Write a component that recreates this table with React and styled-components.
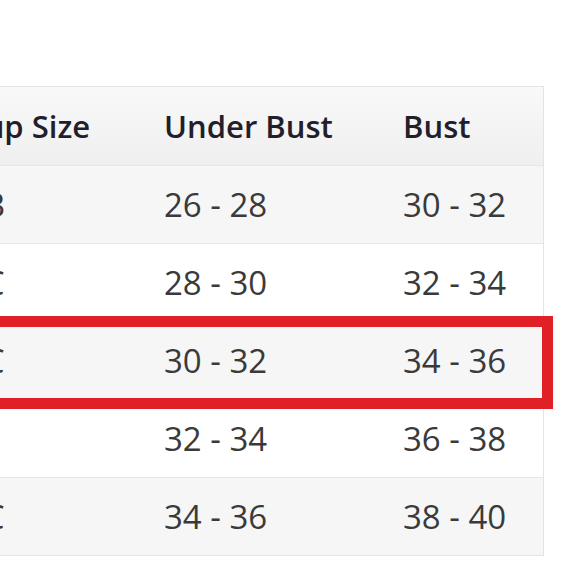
import React from "react";
import styled, { createGlobalStyle } from "styled-components";

const GlobalStyle = createGlobalStyle`
  html, body {
    margin: 0;
    padding: 0;
    background: #ffffff;
  }
  body {
    font-family: "Open Sans", "Liberation Sans", sans-serif;
  }
`;

//page
const Page = styled.div`
  width: 580px;
  height: 580px;
  overflow: hidden;
  display: flex;
  justify-content: flex-end;
  align-items: flex-start;
  padding: 86px 36px 0 0;
  box-sizing: border-box;
  background: #fff;
`;

//table
const Table = styled.div`
  flex-shrink: 0;
  width: 601px;
  border: 1px solid #e4e4e4;
  border-left: none;
  display: flex;
  flex-direction: column;
  box-sizing: border-box;
`;

//row
const Row = styled.div`
  position: relative;
  z-index: ${p => (p.marked ? 1 : 0)};
  display: grid;
  grid-template-columns: 199px 239px 1fr;
  height: 78px;
  align-items: center;
  box-sizing: border-box;
  border-top: ${p => (p.first ? "none" : "1px solid #e6e6e6")};
  background: ${p =>
    p.head ? "linear-gradient(#f9f9f9, #efefef)" : p.odd ? "#f6f6f6" : "#ffffff"};

  ${p =>
    p.marked &&
    `
    &::after {
      content: "";
      position: absolute;
      top: -6px;
      bottom: -10px;
      left: -20px;
      right: -10px;
      border: 11px solid #e11f27;
      pointer-events: none;
    }
  `}
`;

//cell
const Cell = styled.div`
  padding-left: 22px;
  font-size: ${p => (p.head ? "31px" : "33px")};
  font-weight: ${p => (p.head ? 600 : 400)};
  color: ${p => (p.head ? "#221e2c" : "#3a3a3a")};
  white-space: nowrap;
`;

const rows = [
  ["3B", "26 - 28", "30 - 32"],
  ["3C", "28 - 30", "32 - 34"],
  ["3C", "30 - 32", "34 - 36"],
  ["D", "32 - 34", "36 - 38"],
  ["3C", "34 - 36", "38 - 40"]
];

export default function App() {
  return (
    <>
      <GlobalStyle />
      <Page>
        <Table>
          <Row head first>
            <Cell head>Cup Size</Cell>
            <Cell head>Under Bust</Cell>
            <Cell head>Bust</Cell>
          </Row>
          {rows.map((r, i) => (
            <Row key={i} odd={i % 2 === 0} marked={i === 2}>
              {r.map((v, j) => (
                <Cell key={j}>{v}</Cell>
              ))}
            </Row>
          ))}
        </Table>
      </Page>
    </>
  );
}
